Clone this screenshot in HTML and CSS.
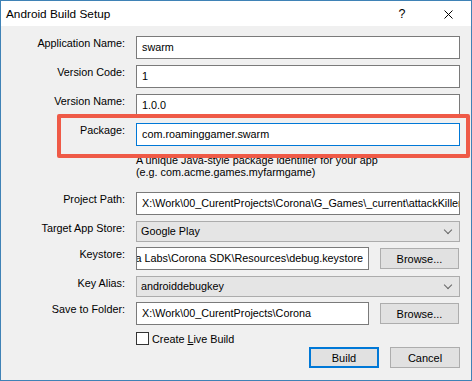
FILE: index.html
```html
<!DOCTYPE html>
<html lang="en">
    <head>
        <meta charset="UTF-8">
        <title>Android Build Setup</title>
        <link rel="stylesheet" href="styles.css">
    </head>
    <body>
        <div class="window">
            <div class="titlebar">
                <span class="title">Android Build Setup</span>
                <span class="help-btn">?</span>
                <span class="close-btn">
                    <svg width="9" height="9" viewBox="0 0 9 9">
                        <path d="M0.5 0.5 L8.5 8.5 M8.5 0.5 L0.5 8.5" stroke="#000" stroke-width="1" fill="none"/>
                    </svg>
                </span>
            </div>

            <div class="dialog">
                <div class="row">
                    <label>Application Name:</label>
                    <div class="field">swarm</div>
                </div>
                <div class="row">
                    <label>Version Code:</label>
                    <div class="field">1</div>
                </div>
                <div class="row">
                    <label>Version Name:</label>
                    <div class="field">1.0.0</div>
                </div>
                <div class="row">
                    <label>Package:</label>
                    <div class="field focused">com.roaminggamer.swarm</div>
                </div>
                <div class="row help-row">
                    <span></span>
                    <div class="help-text">A unique Java-style package identifier for your app<br>(e.g. com.acme.games.myfarmgame)</div>
                </div>
                <div class="row">
                    <label>Project Path:</label>
                    <div class="field">X:\Work\00_CurentProjects\Corona\G_Games\_current\attackKiller\swarm</div>
                </div>
                <div class="row gap-sm">
                    <label>Target App Store:</label>
                    <div class="combo">Google Play <span class="chevron"></span></div>
                </div>
                <div class="row browse">
                    <label>Keystore:</label>
                    <div class="field scrolled"><span>C:\Program Files (x86)\Corona Labs\Corona SDK\Resources\debug.keystore</span></div>
                    <button class="btn">Browse...</button>
                </div>
                <div class="row gap-sm">
                    <label>Key Alias:</label>
                    <div class="combo">androiddebugkey <span class="chevron"></span></div>
                </div>
                <div class="row browse check-gap">
                    <label>Save to Folder:</label>
                    <div class="field">X:\Work\00_CurentProjects\Corona</div>
                    <button class="btn">Browse...</button>
                </div>
                <div class="row check-row">
                    <span></span>
                    <div class="check"><span class="box"></span><span>Create <u>L</u>ive Build</span></div>
                </div>
                <div class="actions">
                    <button class="btn default">Build</button>
                    <button class="btn">Cancel</button>
                </div>
            </div>

            <!-- annotation around the package field -->
            <div class="highlight"></div>
        </div>
    </body>
</html>
```

FILE: styles.css
```css
body {
    margin: 0;
    padding: 0;
    font-family: "Liberation Sans", Arial, sans-serif;
    font-size: 10.8px;
    color: #000;
    background: #fff;
}
.window {
    position: relative;
    width: 472px;
    height: 381px;
    box-sizing: border-box;
    border: 1px solid #3f82b6;
    background: #f0f0f0;
    overflow: hidden;
}
.titlebar {
    height: 25px;
    background: #fff;
    display: flex;
    align-items: center;
    padding-left: 5px;
}
.title {
    flex: 1;
    font-size: 11.8px;
    padding-top: 1px;
}
.help-btn {
    width: 46px;
    text-align: center;
    font-size: 12.5px;
    padding-left: 4px;
    padding-top: 1px;
}
.close-btn {
    width: 46px;
    display: flex;
    justify-content: center;
    padding-top: 1px;
}
.dialog {
    padding: 10px 11px 0 0;
}
.row {
    display: grid;
    grid-template-columns: 124px 324px;
    column-gap: 11px;
    margin-bottom: 6px;
}
.row.browse {
    grid-template-columns: 124px 233px 79px;
}
.row.gap-sm {
    margin-bottom: 5px;
}
.row.check-gap {
    margin-bottom: 7px;
}
.row label {
    text-align: right;
    padding-top: 1px;
}
.field {
    height: 23px;
    box-sizing: border-box;
    border: 1px solid #7a7a7a;
    background: #fff;
    padding: 0 5px;
    line-height: 20px;
    white-space: nowrap;
    overflow: hidden;
}
.field.focused {
    border-color: #0078d7;
}
.field.scrolled {
    display: flex;
    justify-content: flex-end;
}
.help-row {
    margin-bottom: 0;
}
.help-text {
    line-height: 11.5px;
    height: 40px;
    padding-top: 3px;
    box-sizing: border-box;
}
.combo {
    position: relative;
    height: 21px;
    box-sizing: border-box;
    border: 1px solid #acacac;
    background: #e5e5e5;
    padding: 0 4px;
    line-height: 19px;
}
.chevron {
    position: absolute;
    right: 8px;
    top: 5px;
    width: 5px;
    height: 5px;
    border-right: 1px solid #666;
    border-bottom: 1px solid #666;
    transform: rotate(45deg);
}
.btn {
    height: 21px;
    box-sizing: border-box;
    border: 1px solid #adadad;
    background: #e1e1e1;
    color: #000;
    font-family: inherit;
    font-size: 11px;
    padding: 0;
    margin-top: 1px;
}
.btn.default {
    border: 2px solid #0078d7;
}
.check-row {
    margin-bottom: 2px;
}
.check {
    display: flex;
    align-items: center;
    gap: 3px;
    height: 13px;
}
.check .box {
    width: 13px;
    height: 13px;
    box-sizing: border-box;
    border: 1px solid #333;
    background: #fff;
}
.actions {
    display: flex;
    justify-content: flex-end;
    gap: 11px;
}
.actions .btn {
    width: 70px;
    margin: 0;
}
.highlight {
    position: absolute;
    left: 56px;
    top: 113px;
    width: 413px;
    height: 44px;
    box-sizing: border-box;
    border: 4px solid #ef5a47;
    border-radius: 2px;
}
```
